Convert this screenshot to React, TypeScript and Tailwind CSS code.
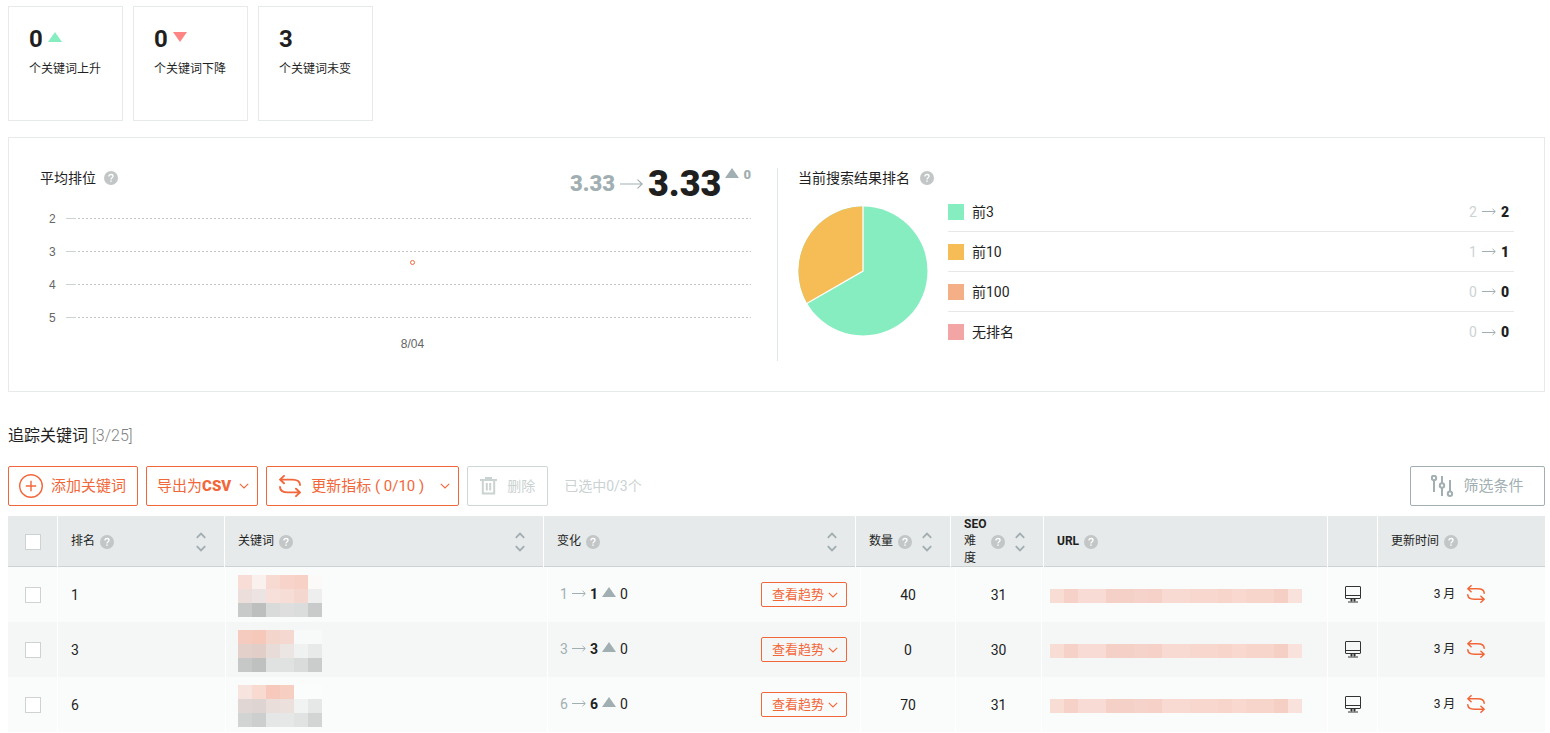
import React from "react";

function Help() {
  return (
    <svg width="14" height="14" viewBox="0 0 14 14" className="shrink-0" aria-label="帮助">
      <circle cx="7" cy="7" r="7" fill="#c3c6c6" />
      <path d="M4.9 5.5C5 4.2 5.9 3.5 7 3.5c1.200 0 2.100.7 2.100 1.800C9.100 6.800 7 6.800 7 8.500" fill="none" stroke="#fff" strokeWidth="1.300" />
      <rect x="6.300" y="9.400" width="1.400" height="1.400" fill="#fff" />
    </svg>
  );
}

function Sort() {
  return (
    <button aria-label="排序" className="ml-auto shrink-0">
      <svg width="10" height="20" viewBox="0 0 10 20" fill="none" stroke="#a1adb0" strokeWidth="1.8">
        <path d="M0.8 5.800L5 1.600L9.200 5.800M0.800 14.200L5 18.400L9.200 14.200" />
      </svg>
    </button>
  );
}

function Chevron() {
  return (
    <svg width="10" height="6" viewBox="0 0 10 6" fill="none" stroke="currentColor" strokeWidth="1.100" className="shrink-0">
      <path d="M0.800 0.800L5 5L9.200 0.800" />
    </svg>
  );
}

function Arrow({ long = false }: { long?: boolean }) {
  return long ? (
    <svg width="23" height="10" viewBox="0 0 23 10" fill="none" stroke="#a1afb2" strokeWidth="1.200" className="shrink-0">
      <path d="M0 5H22M17.500 0.600L22.200 5L17.500 9.400" />
    </svg>
  ) : (
    <svg width="14" height="7" viewBox="0 0 14 7" fill="none" stroke="#a1afb2" strokeWidth="1" className="shrink-0">
      <path d="M0 3.500H13M10.500 0.800L13.300 3.500L10.500 6.200" />
    </svg>
  );
}

function Triangle({ className, down = false }: { className: string; down?: boolean }) {
  return (
    <svg width="14" height="10" viewBox="0 0 14 10" className={className} fill="currentColor">
      <path d={down ? "M0 0H14L7 10Z" : "M0 10H14L7 0Z"} />
    </svg>
  );
}

function Refresh({ size }: { size: number }) {
  return (
    <svg width={size} height={size} viewBox="0 0 22 22" fill="none" stroke="currentColor" strokeWidth="1.900" strokeLinecap="round" strokeLinejoin="round" className="shrink-0">
      <path d="M5 0.900L1 4.600L5 8.300M1 4.600H13C18 4.600 21 6.500 21 10" />
      <path d="M17 13.700L21 17.400L17 21.100M21 17.400H9C4 17.400 1 15.500 1 12" />
    </svg>
  );
}

function Monitor() {
  return (
    <svg width="16" height="17" viewBox="0 0 16 17" fill="none" stroke="#333" strokeWidth="1">
      <rect x="0.500" y="0.500" width="15" height="12" rx="0.500" />
      <path d="M0.500 9.500H15.500M6.500 12.500V15.500M9.500 12.500V15.500M5 14H11M3 16H13" />
    </svg>
  );
}

const stats = [
  { value: "0", label: "个关键词上升", trend: "up" },
  { value: "0", label: "个关键词下降", trend: "down" },
  { value: "3", label: "个关键词未变", trend: "" },
];

const legend = [
  { name: "前3", color: "bg-[#86edc1]", from: 2, to: 2 },
  { name: "前10", color: "bg-[#f6bc55]", from: 1, to: 1 },
  { name: "前100", color: "bg-[#f4af87]", from: 0, to: 0 },
  { name: "无排名", color: "bg-[#f3a5a6]", from: 0, to: 0 },
];

const urlTones = ["#f8ddd5", "#f6d1c7", "#f8dbd4", "#f8dbd4", "#f5d0c6", "#f5d0c6", "#f6d3ca", "#f6d1c8", "#f8dad3", "#f8dad3", "#f7d7ce", "#f7d7ce", "#f7d5cb", "#f8d8cf", "#f7d5cb", "#f7d5cb", "#f5cfc3", "#f9e2db"];

const rows = [
  {
    rank: 1, volume: 40, difficulty: 31,
    tones: ["#f8dcd6", "#faf0ee", "#f7dad2", "#f7d3c9", "#f7d1c5", "#fbfaf8", "#ecdedb", "#ece4e2", "#f7e0da", "#f6ded7", "#f4d8d0", "#eeeeee", "#c8c9c9", "#bdbfbe", "#d9dada", "#dddedd", "#dbdddc", "#c9cbca"],
  },
  {
    rank: 3, volume: 0, difficulty: 30,
    tones: ["#f5cbbf", "#f5c8ba", "#f4d5cc", "#f5d8cf", "#f8f9f9", "#f8f9f9", "#e3d0ca", "#e2cec8", "#e8dcd8", "#ebe6e4", "#f0f1f1", "#e8e9e9", "#c6c8c7", "#bfc1c0", "#e0e2e1", "#e0e2e1", "#dadbdb", "#cbcdcc"],
  },
  {
    rank: 6, volume: 70, difficulty: 31,
    tones: ["#f8e4df", "#f8dad1", "#f6c9bc", "#f7cec2", "#fbfcfc", "#fbfcfc", "#e0d7d4", "#ded4d1", "#eadedb", "#ece0dd", "#f1f2f2", "#e6e8e7", "#d2d4d3", "#cdcfce", "#e5e7e6", "#e6e7e7", "#e1e3e2", "#d3d5d4"],
  },
];

const th = "flex items-center border-l border-white pl-[13px] pr-[18px] text-left text-[12px] font-normal leading-[17px]";
const td = "flex items-center border-l border-white";
const action = "flex h-10 items-center rounded-[2px] border border-[#f2673a] text-[15px] text-[#f2673a]";
const checkbox = "size-4 appearance-none border border-[#cfd2d2] bg-white checked:bg-[#f2673a]";

export default function App() {
  return (
    <main className="bg-white pb-px pl-2 pr-[5px] pt-1.5 font-['Roboto','Noto_Sans_CJK_SC',sans-serif] text-[14px] leading-5 text-[#1f1f1f]">
      <section className="flex gap-2.5">
        {stats.map((s) => (
          <div key={s.label} className="size-[115px] border border-[#e6eaea] px-5 pt-4">
            <div className="flex h-8 items-center gap-[5px] text-[24px] font-bold leading-8">
              {s.value}
              {s.trend === "up" && <Triangle className="mb-1 text-[#86edc1]" />}
              {s.trend === "down" && <Triangle down className="mb-1 text-[#ff8584]" />}
            </div>
            <p className="mt-1 whitespace-nowrap text-[12px]">{s.label}</p>
          </div>
        ))}
      </section>

      <section className="mt-4 grid grid-cols-[769fr_766fr] border border-[#e6eaea] py-[30px]">
        <div className="h-[193px] border-r border-[#e1e7e7] pl-[31px] pr-[26px]">
          <div className="flex h-[34px] items-start">
            <h2 className="flex items-center gap-2">平均排位 <Help /></h2>
            <div className="ml-auto flex h-8 items-center font-black text-[#a1afb2]">
              <span className="text-[22px]">3.33</span>
              <span className="mx-[5px]"><Arrow long /></span>
              <span className="text-[36px] text-[#1f1f1f]">3.33</span>
              <span className="ml-1 flex items-center gap-1 self-start text-[13px] leading-3">
                <Triangle className="mb-1" />0
              </span>
            </div>
          </div>
          <div className="relative font-['Liberation_Sans',sans-serif] text-[12px] text-[#666]">
            {[2, 3, 4, 5].map((n) => (
              <div key={n} className="flex h-[33px] items-center">
                <span className="w-[26px] pl-[9px]">{n}</span>
                <span className="h-px w-2.5 bg-[#cdd2d2]" />
                <span className="ml-0.5 h-px flex-1 bg-[repeating-linear-gradient(90deg,#c4c4c4_0_2px,transparent_2px_4px)]" />
              </div>
            ))}
            <span className="absolute left-[52%] top-[58px] size-[5px] rounded-full border border-[#f2673a]" />
            <p className="pl-[34px] text-center">8/04</p>
          </div>
        </div>

        <div className="pl-5 pr-[30px]">
          <h2 className="flex items-center gap-2.5">当前搜索结果排名 <Help /></h2>
          <div className="mt-1 flex gap-5">
            <svg width="130" height="130" viewBox="-65 -65 130 130" className="mt-3.5 shrink-0">
              <circle r="64.500" fill="#86edc1" />
              <path d="M0 0V-64.500A64.500 64.500 0 0 0 -55.860 32.250Z" fill="#f6bc55" />
              <path d="M0 -65V0L-56.300 32.500" fill="none" stroke="#fff" strokeWidth="1.300" />
            </svg>
            <ul className="flex-1">
              {legend.map((l) => (
                <li key={l.name} className="flex h-10 items-center border-b border-[#e6e8e8] pr-[5px] last:border-b-0">
                  <span className={`mr-2 size-4 ${l.color}`} />
                  <span>{l.name}</span>
                  <span className="ml-auto flex items-center gap-[5px]">
                    <span className="text-[#cdd3d3]">{l.from}</span>
                    <Arrow />
                    <b className="font-black">{l.to}</b>
                  </span>
                </li>
              ))}
            </ul>
          </div>
        </div>
      </section>

      <h2 className="mt-8 text-[16px] leading-6">
        追踪关键词 <span className="font-light text-[#7f8282]">[3/25]</span>
      </h2>

      <div className="mt-[18px] flex gap-2">
        <button className={`${action} gap-2 pl-2.5 pr-[11px]`}>
          <svg width="24" height="24" viewBox="0 0 24 24" fill="none" stroke="currentColor" strokeWidth="1.400" className="shrink-0">
            <circle cx="12" cy="12" r="11.300" />
            <path d="M6.800 12H17.200M12 6.800V17.200" />
          </svg>
          添加关键词
        </button>
        <button className={`${action} gap-2 pl-2.5 pr-2`}>
          <span>导出为<b className="font-black">CSV</b></span>
          <Chevron />
        </button>
        <button className={`${action} gap-2.5 pl-3 pr-2`}>
          <Refresh size={22} />
          <span className="whitespace-pre">更新指标 ( 0/10 )</span>
          <span className="ml-1.5"><Chevron /></span>
        </button>
        <button disabled className="flex h-10 items-center gap-2.5 rounded-[2px] border border-[#cfd6d6] px-3 text-[14px] text-[#cbd2d2]">
          <svg width="17" height="18" viewBox="0 0 17 18" fill="none" stroke="currentColor" strokeWidth="2">
            <path d="M0 3H17M5 1H12M2.800 3V16.500H14.200V3M6.800 6V13.500M10.200 6V13.500" />
          </svg>
          删除
        </button>
        <span className="ml-2 self-center text-[#cbd2d2]">已选中0/3个</span>
        <button className="ml-auto flex h-10 w-[135px] items-center justify-center gap-2.5 rounded-[2px] border border-[#a1afb2] text-[15px] text-[#a1afb2]">
          <svg width="22" height="22" viewBox="0 0 22 22" fill="none" stroke="currentColor" strokeWidth="2">
            <circle cx="3" cy="3" r="2.200" />
            <circle cx="11" cy="10.500" r="2.200" />
            <circle cx="19" cy="18.800" r="2.200" />
            <path d="M3 5V17M11 1V8.300M11 12.700V21M19 5V16.600" />
          </svg>
          筛选条件
        </button>
      </div>

      <table className="mt-2.5 block w-full">
        <thead className="block">
          <tr className="grid h-[51px] grid-cols-[49px_167px_319fr_312fr_95px_93px_284fr_50px_168px] border-b border-[#cdd2d2] bg-[#e6eaea]">
            <th className="flex items-center justify-center"><input type="checkbox" aria-label="全选" className={checkbox} /></th>
            <th className={`${th} gap-[5px]`}>排名 <Help /><Sort /></th>
            <th className={`${th} gap-[5px]`}>关键词 <Help /><Sort /></th>
            <th className={`${th} gap-[5px]`}>变化 <Help /><Sort /></th>
            <th className={`${th} gap-[5px]`}>数量 <Help /><Sort /></th>
            <th className={th}><span className="w-[27px]"><b>SEO</b><br />难<br />度</span><Help /><Sort /></th>
            <th className={`${th} gap-[5px]`}><b>URL</b> <Help /></th>
            <th className={th} aria-label="设备" />
            <th className={`${th} gap-[5px]`}>更新时间 <Help /></th>
          </tr>
        </thead>
        <tbody className="block">
          {rows.map((r) => (
            <tr key={r.rank} className="grid h-[55px] grid-cols-[49px_168px_322fr_313fr_95px_86px_286fr_50px_168px] bg-[#fafcfb] even:bg-[#f5f7f7]">
              <td className="flex items-center justify-center"><input type="checkbox" aria-label={`选择排名 ${r.rank}`} className={checkbox} /></td>
              <td className={`${td} pl-[13px]`}>{r.rank}</td>
              <td className={`${td} pl-3 pt-[3px]`}>
                <div className="grid grid-cols-[repeat(6,14px)]">
                  {r.tones.map((c, i) => <span key={i} className="size-3.5" style={{ backgroundColor: c }} />)}
                </div>
              </td>
              <td className={`${td} pl-3 pr-[13px]`}>
                <span className="flex items-center gap-1 pb-0.5">
                  <span className="text-[#a1afb2]">{r.rank}</span>
                  <Arrow />
                  <b>{r.rank}</b>
                  <Triangle className="mb-1 text-[#a1afb2]" />
                  <span>0</span>
                </span>
                <button className="ml-auto flex h-[25px] items-center gap-1 rounded-[2px] border border-[#f2673a] pl-2.5 pr-2 text-[13px] text-[#f2673a]">
                  查看趋势 <Chevron />
                </button>
              </td>
              <td className={`${td} justify-center`}>{r.volume}</td>
              <td className={`${td} justify-center`}>{r.difficulty}</td>
              <td className={`${td} overflow-hidden pl-2 pt-[3px]`}>
                <div className="flex">
                  {urlTones.map((c, i) => <span key={i} className="size-3.5" style={{ backgroundColor: c }} />)}
                </div>
              </td>
              <td className={`${td} justify-center`}><Monitor /></td>
              <td className={`${td} justify-center gap-3 pb-0.5 pr-1 text-[12px]`}>
                3 月
                <button aria-label="更新" className="text-[#f2673a]"><Refresh size={18} /></button>
              </td>
            </tr>
          ))}
        </tbody>
      </table>
    </main>
  );
}
